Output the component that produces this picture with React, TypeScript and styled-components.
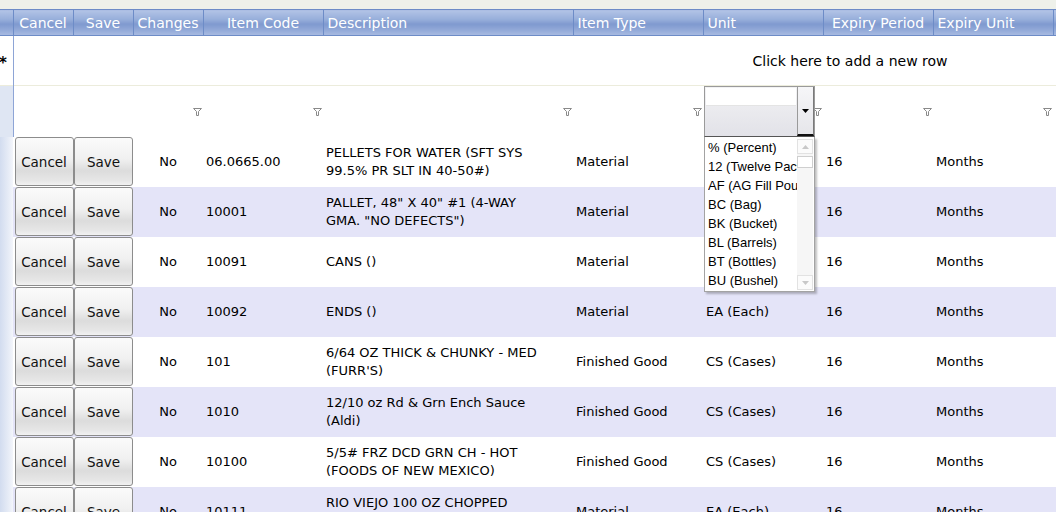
import styled, { createGlobalStyle } from 'styled-components';

const GlobalStyle = createGlobalStyle`
  html, body { margin: 0; padding: 0; background: #ffffff; }
  body { font-family: 'DejaVu Sans', Verdana, sans-serif; overflow: hidden; }
`;

const Page = styled.div`
  width: 1056px;
  height: 512px;
  overflow: hidden;
  background: #eef1ea;
  padding-top: 9px;
  box-sizing: border-box;
`;

const GridWrap = styled.div`
  position: relative;
  width: 1100px;
`;

const Table = styled.table`
  border-collapse: collapse;
  table-layout: fixed;
  width: 1100px;
  font-size: 13px;
  color: #000;
  background: #fff;
`;

const HeadCell = styled.th<{ $align?: string }>`
  height: 25px;
  padding: 0 4px;
  font-weight: normal;
  font-size: 14px;
  color: #fff;
  text-align: ${({ $align }) => $align || 'left'};
  white-space: nowrap;
  overflow: hidden;
  border-top: 1px solid #6d8cc7;
  border-bottom: 1px solid #6d8cc7;
  border-left: 1px solid #6d8cc7;
  background: linear-gradient(#b2c3e6 0%, #98afdb 35%, #7f99cf 55%, #94abd9 80%, #a9bbe2 100%);
  &:first-child { border-left: none; }
`;

const AddRow = styled.tr`
  height: 50px;
  border-bottom: 1px solid #ececdc;
`;

const RowHeadCell = styled.td<{ $kind: 'add' | 'filter' | 'data' }>`
  padding: 0;
  border-right: 1px solid #8ea5d6;
  font-size: 16px;
  overflow: hidden;
  background: ${({ $kind }) =>
    $kind === 'add'
      ? '#ffffff'
      : $kind === 'filter'
      ? '#dfe6f3'
      : 'linear-gradient(90deg, #d2dcef 0%, #e8edf7 70%, #f4f6fb 100%)'};
  border-right-color: ${({ $kind }) => ($kind === 'data' ? 'transparent' : '#8ea5d6')};
`;

const Star = styled.span`
  display: block;
  margin-left: -1px;
  padding-top: 5px;
  font-family: 'DejaVu Sans', Verdana, sans-serif;
  font-size: 15px;
  font-weight: bold;
`;

const AddText = styled.td`
  text-align: left;
  padding-left: 739px;
  font-size: 14px;
  white-space: nowrap;
`;

const FilterRow = styled.tr`
  height: 51px;
`;

const FilterCell = styled.td`
  padding: 0 1px 0 0;
  text-align: right;
  vertical-align: middle;
`;

const DataRow = styled.tr<{ $alt: boolean }>`
  height: 50px;
  background: ${({ $alt }) => ($alt ? '#e4e4f8' : '#ffffff')};
`;

const ButtonCell = styled.td`
  padding: 0 0 0 1px;
`;

const GridButton = styled.button`
  display: block;
  width: 59px;
  height: 49px;
  margin: 0;
  border: 1px solid #8c8c8c;
  border-radius: 3px;
  background: linear-gradient(#fbfbfb 0%, #f0f0f0 45%, #dcdcdc 70%, #e6e6e6 90%, #f2f2f2 100%);
  font-family: 'DejaVu Sans', Verdana, sans-serif;
  font-size: 13.5px;
  color: #111;
  padding: 0;
`;

const Cell = styled.td<{ $align?: string }>`
  padding: 0 3px;
  text-align: ${({ $align }) => $align || 'left'};
  line-height: 18px;
  vertical-align: middle;
  overflow: hidden;
`;

const Combo = styled.div`
  position: absolute;
  left: 704px;
  top: 77px;
  width: 111px;
`;

const ComboBox = styled.div`
  display: flex;
  height: 51px;
  box-sizing: border-box;
  border: 1px solid #9a9a9a;
  border-bottom-color: #555;
  background: linear-gradient(#f2f2f4, #e2e2e8);
`;

const ComboInput = styled.div`
  flex: 1;
  padding: 1px;
  & > div {
    height: 17px;
    background: #ffffff;
    border-bottom: 1px solid #e4e4e4;
  }
`;

const ComboArrow = styled.div`
  width: 15px;
  border-left: 1px solid #9a9a9a;
  border-right: 1px solid #7a7a7a;
  border-bottom: 2px solid #111;
  display: flex;
  align-items: center;
  justify-content: center;
  background: linear-gradient(#f6f6f8, #e6e6ea);
`;

const ListBox = styled.div`
  position: relative;
  height: 155px;
  box-sizing: border-box;
  border: 1px solid #a3a3a3;
  border-top: none;
  background: #fff;
  box-shadow: 2px 2px 2px rgba(0, 0, 0, 0.25);
  padding: 1px 0 0 3px;
  overflow: hidden;
`;

const ListItem = styled.div`
  height: 19px;
  line-height: 19px;
  font-family: 'Liberation Sans', Arial, sans-serif;
  font-size: 13px;
  white-space: nowrap;
  overflow: hidden;
  width: 90px;
`;

const ScrollBar = styled.div`
  position: absolute;
  right: 1px;
  top: 2px;
  bottom: 1px;
  width: 16px;
  background: #f6f6f6;
  display: flex;
  flex-direction: column;
`;

const ScrollBtn = styled.div`
  height: 15px;
  border: 1px solid #e2e2e2;
  box-sizing: border-box;
  display: flex;
  align-items: center;
  justify-content: center;
  background: #fbfbfb;
`;

const ScrollThumb = styled.div`
  height: 10px;
  margin-top: 2px;
  border: 1px solid #cfcfcf;
  background: #fff;
`;

const ScrollTrack = styled.div`
  flex: 1;
`;

const Funnel = () => (
  <svg width="9" height="8" viewBox="0 0 9 8" style={{ display: 'inline-block', verticalAlign: 'middle' }}>
    <path d="M0.5 0.5 H8.5 L5.5 3.5 V7.5 H3.5 V3.5 Z" fill="#fff" stroke="#8a8a8a" strokeWidth="1" />
  </svg>
);

const Tri = ({ up, color }: { up?: boolean; color: string }) => (
  <svg width="7" height="4" viewBox="0 0 7 4">
    <path d={up ? 'M0 4 L3.5 0 L7 4 Z' : 'M0 0 L7 0 L3.5 4 Z'} fill={color} />
  </svg>
);

type Row = { code: string; desc: string[]; type: string; unit: string };

const ROWS: Row[] = [
  { code: '06.0665.00', desc: ['PELLETS FOR WATER (SFT SYS', '99.5% PR SLT IN 40-50#)'], type: 'Material', unit: '' },
  { code: '10001', desc: ['PALLET, 48" X 40" #1 (4-WAY', 'GMA. "NO DEFECTS")'], type: 'Material', unit: '' },
  { code: '10091', desc: ['CANS ()'], type: 'Material', unit: '' },
  { code: '10092', desc: ['ENDS ()'], type: 'Material', unit: 'EA (Each)' },
  { code: '101', desc: ['6/64 OZ THICK & CHUNKY - MED', "(FURR'S)"], type: 'Finished Good', unit: 'CS (Cases)' },
  { code: '1010', desc: ['12/10 oz Rd & Grn Ench Sauce', '(Aldi)'], type: 'Finished Good', unit: 'CS (Cases)' },
  { code: '10100', desc: ['5/5# FRZ DCD GRN CH - HOT', '(FOODS OF NEW MEXICO)'], type: 'Finished Good', unit: 'CS (Cases)' },
  { code: '10111', desc: ['RIO VIEJO 100 OZ CHOPPED', 'GREEN CHILE'], type: 'Material', unit: 'EA (Each)' },
];

const UNITS = ['% (Percent)', '12 (Twelve Pack)', 'AF (AG Fill Pouch)', 'BC (Bag)', 'BK (Bucket)', 'BL (Barrels)', 'BT (Bottles)', 'BU (Bushel)'];

const COLS = [13, 60, 60, 70, 120, 250, 130, 120, 110, 120, 47];

export default function App() {
  return (
    <Page>
      <GlobalStyle />
      <GridWrap>
        <Table>
          <colgroup>
            {COLS.map((w, i) => (
              <col key={i} style={{ width: w }} />
            ))}
          </colgroup>
          <thead>
            <tr>
              <HeadCell />
              <HeadCell $align="center">Cancel</HeadCell>
              <HeadCell $align="center">Save</HeadCell>
              <HeadCell $align="center">Changes</HeadCell>
              <HeadCell $align="center">Item Code</HeadCell>
              <HeadCell>Description</HeadCell>
              <HeadCell>Item Type</HeadCell>
              <HeadCell>Unit</HeadCell>
              <HeadCell $align="center">Expiry Period</HeadCell>
              <HeadCell>Expiry Unit</HeadCell>
              <HeadCell />
            </tr>
          </thead>
          <tbody>
            <AddRow>
              <RowHeadCell $kind="add">
                <Star>*</Star>
              </RowHeadCell>
              <AddText colSpan={10}>Click here to add a new row</AddText>
            </AddRow>
            <FilterRow>
              <RowHeadCell $kind="filter" />
              <FilterCell />
              <FilterCell />
              <FilterCell><Funnel /></FilterCell>
              <FilterCell><Funnel /></FilterCell>
              <FilterCell><Funnel /></FilterCell>
              <FilterCell><Funnel /></FilterCell>
              <FilterCell><Funnel /></FilterCell>
              <FilterCell><Funnel /></FilterCell>
              <FilterCell><Funnel /></FilterCell>
              <FilterCell />
            </FilterRow>
            {ROWS.map((r, i) => (
              <DataRow key={r.code} $alt={i % 2 === 1}>
                <RowHeadCell $kind="data" />
                <ButtonCell><GridButton>Cancel</GridButton></ButtonCell>
                <ButtonCell><GridButton>Save</GridButton></ButtonCell>
                <Cell $align="center">No</Cell>
                <Cell>{r.code}</Cell>
                <Cell>
                  {r.desc.map((d, j) => (
                    <div key={j}>{d}</div>
                  ))}
                </Cell>
                <Cell>{r.type}</Cell>
                <Cell>{r.unit}</Cell>
                <Cell>16</Cell>
                <Cell>Months</Cell>
                <Cell />
              </DataRow>
            ))}
          </tbody>
        </Table>
        <Combo>
          <ComboBox>
            <ComboInput><div /></ComboInput>
            <ComboArrow><Tri color="#000" /></ComboArrow>
          </ComboBox>
          <ListBox>
            {UNITS.map((u) => (
              <ListItem key={u}>{u}</ListItem>
            ))}
            <ScrollBar>
              <ScrollBtn><Tri up color="#c8c8c8" /></ScrollBtn>
              <ScrollThumb />
              <ScrollTrack />
              <ScrollBtn><Tri color="#c8c8c8" /></ScrollBtn>
            </ScrollBar>
          </ListBox>
        </Combo>
      </GridWrap>
    </Page>
  );
}
